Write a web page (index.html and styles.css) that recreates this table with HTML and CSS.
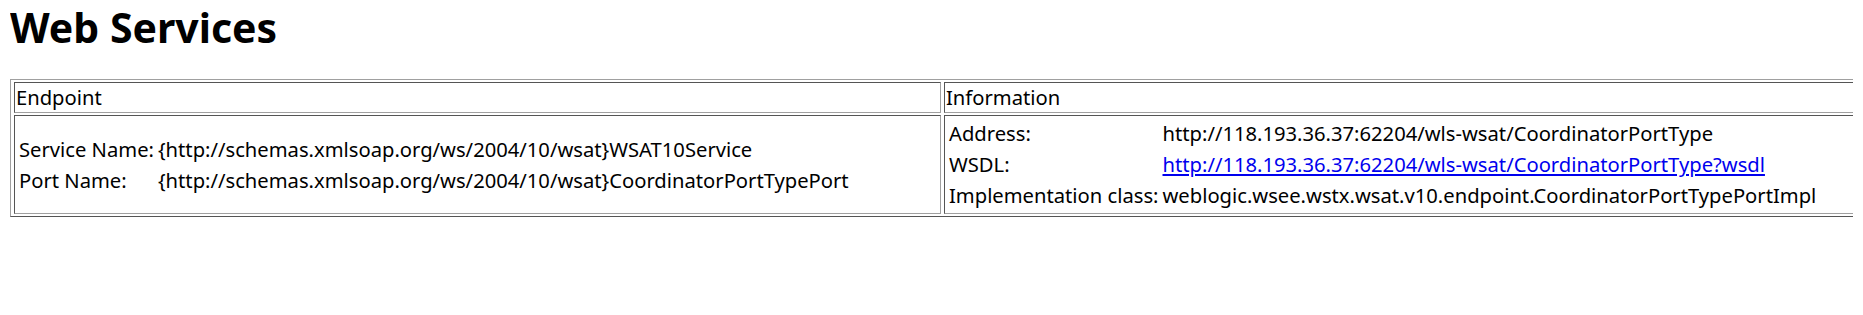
FILE: index.html
```html
<!DOCTYPE html>
<html>
<head>
<meta charset="utf-8">
<title>Web Services</title>
<link rel="stylesheet" href="styles.css">
</head>
<body>
<h1 class="page-title">Web Services</h1>
<table class="services">
  <tr>
    <th class="col-endpoint">Endpoint</th>
    <th class="col-info">Information</th>
  </tr>
  <tr>
    <td class="col-endpoint">
      <table class="kv">
        <tr><td>Service Name:</td><td>{http://schemas.xmlsoap.org/ws/2004/10/wsat}WSAT10Service</td></tr>
        <tr><td>Port Name:</td><td>{http://schemas.xmlsoap.org/ws/2004/10/wsat}CoordinatorPortTypePort</td></tr>
      </table>
    </td>
    <td class="col-info">
      <table class="kv">
        <tr><td>Address:</td><td>http://118.193.36.37:62204/wls-wsat/CoordinatorPortType</td></tr>
        <tr><td>WSDL:</td><td><a href="#">http://118.193.36.37:62204/wls-wsat/CoordinatorPortType?wsdl</a></td></tr>
        <tr><td>Implementation class:</td><td>weblogic.wsee.wstx.wsat.v10.endpoint.CoordinatorPortTypePortImpl</td></tr>
      </table>
    </td>
  </tr>
</table>
</body>
</html>
```
FILE: styles.css
```css
html, body {
  overflow: hidden;
}

body {
  margin: 0 10px;
  font-family: "Noto Sans", "Noto Sans CJK SC", sans-serif;
  font-size: 20.2px;
  line-height: 27px;
  color: #000;
  background: #fff;
}

.page-title {
  margin: 0 0 25px;
  font-size: 41px;
  line-height: 54px;
  font-weight: bold;
}

.services {
  width: 2000px;
  border-collapse: separate;
  border-spacing: 3px 2px;
  border: 1px solid;
  border-color: #a0a0a0 #555 #555 #a0a0a0;
}

.services > tbody > tr > th,
.services > tbody > tr > td {
  padding: 1px;
  border: 1px solid;
  border-color: #555 #a0a0a0 #a0a0a0 #555;
  text-align: left;
  font-weight: normal;
  vertical-align: middle;
  white-space: nowrap;
}

.services .col-endpoint {
  width: 923px;
}

.kv {
  border-collapse: separate;
  border-spacing: 2px;
}

.kv td {
  padding: 1px;
  white-space: nowrap;
  text-align: left;
}

.kv a {
  color: #0000ee;
}
```
